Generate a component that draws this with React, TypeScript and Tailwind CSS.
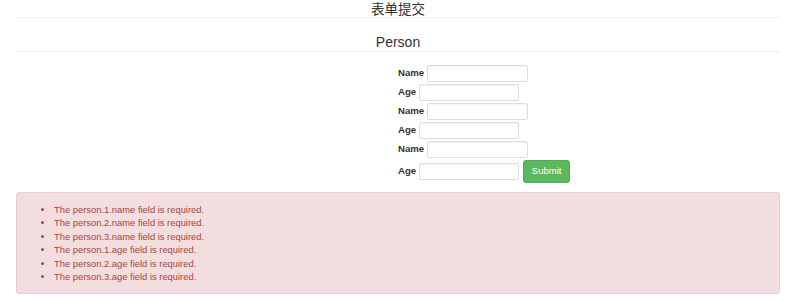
const errors = [
  'The person.1.name field is required.',
  'The person.2.name field is required.',
  'The person.3.name field is required.',
  'The person.1.age field is required.',
  'The person.2.age field is required.',
  'The person.3.age field is required.',
];

function Field({ label, width }: { label: string; width: string }) {
  return (
    <div className="flex items-center gap-[3px]">
      <label className="text-[9.6px] font-bold text-[#333]">{label}</label>
      <input
        type="text"
        className={`${width} h-[17px] rounded-[2px] border border-[#ddd] bg-white shadow-[inset_0_1px_1px_rgba(0,0,0,0.05)] outline-none`}
      />
    </div>
  );
}

export default function App() {
  return (
    <div className="min-h-[301px] bg-white pl-4 pr-5 font-['Liberation_Sans',Arial,sans-serif] text-[#333]">
      {/* Page title */}
      <h1 className="h-[18px] border-b border-[#eee] pt-px text-center font-['Noto_Sans_CJK_SC','Liberation_Sans',sans-serif] text-[13.5px] leading-[15px] font-normal">
        表单提交
      </h1>

      {/* Section heading */}
      <h2 className="mt-[16px] border-b border-[#eee] text-center text-[14px] leading-[17px] font-normal">
        Person
      </h2>

      {/* Form */}
      <form className="mt-[13px] ml-[50%] flex flex-col gap-[2px]">
        <Field label="Name" width="w-[101px]" />
        <Field label="Age" width="w-[100px]" />
        <Field label="Name" width="w-[101px]" />
        <Field label="Age" width="w-[100px]" />
        <Field label="Name" width="w-[101px]" />
        <div className="flex items-center gap-[4px]">
          <Field label="Age" width="w-[100px]" />
          <button
            type="button"
            className="h-[23px] w-[47px] rounded-[3px] border border-[#4cae4c] bg-[#5cb85c] text-[9.5px] text-white"
          >
            Submit
          </button>
        </div>
      </form>

      {/* Validation errors */}
      <div className="mt-[9px] rounded-[3px] border border-[#ebccd1] bg-[#f2dede] px-[10px] py-[10px] text-[#a94442]">
        <ul className="list-disc pl-[27px] text-[9.4px] leading-[13.4px]">
          {errors.map((e) => (
            <li key={e}>{e}</li>
          ))}
        </ul>
      </div>
    </div>
  );
}
